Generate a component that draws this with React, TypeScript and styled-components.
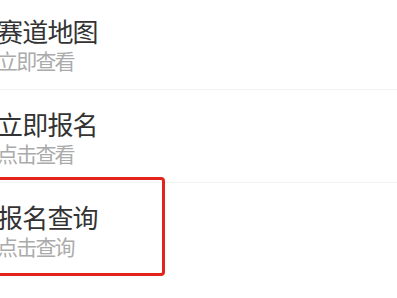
import React from "react";
import styled, { createGlobalStyle } from "styled-components";

const GlobalStyle = createGlobalStyle`
  html, body {
    margin: 0;
    padding: 0;
    background: #ffffff;
    overflow: hidden;
  }
`;

const List = styled.div`
  width: 397px;
  height: 298px;
  margin-top: -4px;
  font-family: "Noto Sans CJK SC", "Noto Sans", sans-serif;
`;

const Row = styled.div<{ $highlight?: boolean }>`
  position: relative;
  height: 93px;
  box-sizing: border-box;
  padding: 19px 0 0 0;
  border-top: 1px solid #f3f3f3;

  ${(p) =>
    p.$highlight &&
    `
    &::after {
      content: "";
      position: absolute;
      left: -20px;
      top: -6px;
      width: 185px;
      height: 99px;
      box-sizing: border-box;
      border: 3px solid #e3241d;
      border-radius: 4px;
    }
  `}
`;

const Title = styled.div`
  margin-left: -3px;
  font-size: 26px;
  line-height: 30px;
  letter-spacing: -0.8px;
  color: #333333;
`;

const Sub = styled.div`
  margin-left: -3px;
  margin-top: 2px;
  font-size: 21px;
  line-height: 24px;
  letter-spacing: -1.8px;
  color: #ababab;
`;

const items = [
  { title: "赛道地图", sub: "立即查看" },
  { title: "立即报名", sub: "点击查看" },
  { title: "报名查询", sub: "点击查询", highlight: true },
];

export default function App() {
  return (
    <>
      <GlobalStyle />
      <List>
        {items.map((it) => (
          <Row key={it.title} $highlight={it.highlight}>
            <Title>{it.title}</Title>
            <Sub>{it.sub}</Sub>
          </Row>
        ))}
      </List>
    </>
  );
}
